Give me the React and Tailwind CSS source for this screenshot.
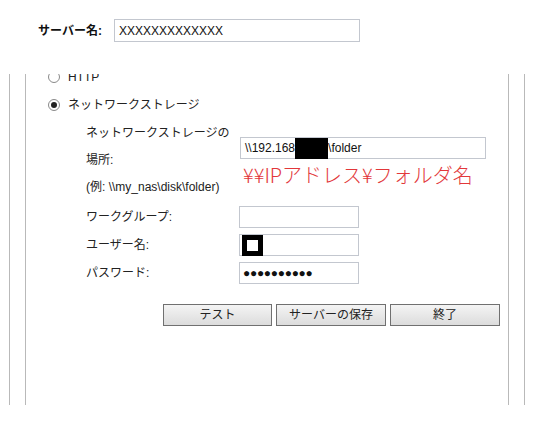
import React from 'react';

const font = { fontFamily: '"Liberation Sans", "Noto Sans CJK JP", Arial, sans-serif' };

const Radio = ({ checked }) => (
  <span className="inline-flex items-center justify-center w-[12px] h-[12px] rounded-full border border-[#8a8a8a] bg-white">
    {checked && <span className="w-[6px] h-[6px] rounded-full bg-[#222]" />}
  </span>
);

const Field = ({ children, className = '' }) => (
  <div className={`h-[22px] border border-[#c3c7cf] bg-white flex items-center text-[12px] text-[#111] ${className}`}>
    {children}
  </div>
);

const Btn = ({ children, className = '' }) => (
  <button
    type="button"
    className={`h-[22px] border border-[#707070] bg-gradient-to-b from-[#f4f4f4] to-[#dcdcdc] text-[12px] text-[#222] ${className}`}
  >
    {children}
  </button>
);

export default function App() {
  return (
    <div className="w-[542px] h-[425px] bg-white overflow-hidden text-[#222]" style={font}>
      {/* server name */}
      <div className="flex items-start pt-[19px] h-[74px]">
        <div className="flex items-center">
          <span className="ml-[38px] w-[76px] text-[12px] font-bold text-[#111]">サーバー名:</span>
          <div className="w-[246px] h-[23px] border border-[#c3c7cf] flex items-center pl-[4px] text-[12px] text-[#111]">
            XXXXXXXXXXXXX
          </div>
        </div>
      </div>

      {/* panel, scrolled a little so the first option is cut at the top */}
      <div className="ml-[9px] w-[516px] h-[331px] border-l border-r border-[#b9b9b9]">
        <div className="ml-[15px] w-[484px] h-full border-l border-r border-[#b9b9b9] overflow-hidden">
          <div className="-mt-[11px] pl-[22px] text-[12px]">
            <div className="h-[28px] flex items-center gap-[8px]">
              <Radio />
              <span>HTTP</span>
            </div>
            <div className="h-[28px] flex items-center gap-[8px]">
              <Radio checked />
              <span>ネットワークストレージ</span>
            </div>

            <div className="pl-[38px]">
              <div className="flex">
                <div className="w-[153px] whitespace-nowrap">
                  <div className="h-[27px] flex items-center">ネットワークストレージの</div>
                  <div className="h-[27px] flex items-center">場所:</div>
                  <div className="h-[27px] flex items-center">(例: \\my_nas\disk\folder)</div>
                </div>
                <div className="pt-[18px]">
                  <Field className="w-[246px] ml-[1px] pl-[4px]">
                    <span>\\192.168</span>
                    <span className="w-[33px] h-[21px] bg-black" />
                    <span>\folder</span>
                  </Field>
                  <div
                    className="mt-[4px] ml-[4px] text-[20px] leading-[24px] font-light text-[#e2373a] whitespace-nowrap"
                    style={{ fontFamily: '"Noto Sans CJK JP", sans-serif' }}
                  >
                    ¥¥IPアドレス¥フォルダ名
                  </div>
                </div>
              </div>

              <div className="mt-[3px]">
                <div className="h-[28px] flex items-center">
                  <span className="w-[153px]">ワークグループ:</span>
                  <Field className="w-[120px]" />
                </div>
                <div className="h-[28px] flex items-center">
                  <span className="w-[153px]">ユーザー名:</span>
                  <Field className="w-[120px] pl-[2px]">
                    <span className="w-[21px] h-[21px] border-[5px] border-black bg-white" />
                  </Field>
                </div>
                <div className="h-[28px] flex items-center">
                  <span className="w-[153px]">パスワード:</span>
                  <Field className="w-[120px] pl-[3px] text-[12px] tracking-[-0.3px]">
                    ●●●●●●●●●●
                  </Field>
                </div>
              </div>
            </div>

            <div className="mt-[17px] ml-[115px] flex gap-[4px]">
              <Btn className="w-[109px]">テスト</Btn>
              <Btn className="w-[110px]">サーバーの保存</Btn>
              <Btn className="w-[110px]">終了</Btn>
            </div>
          </div>
        </div>
      </div>
    </div>
  );
}
